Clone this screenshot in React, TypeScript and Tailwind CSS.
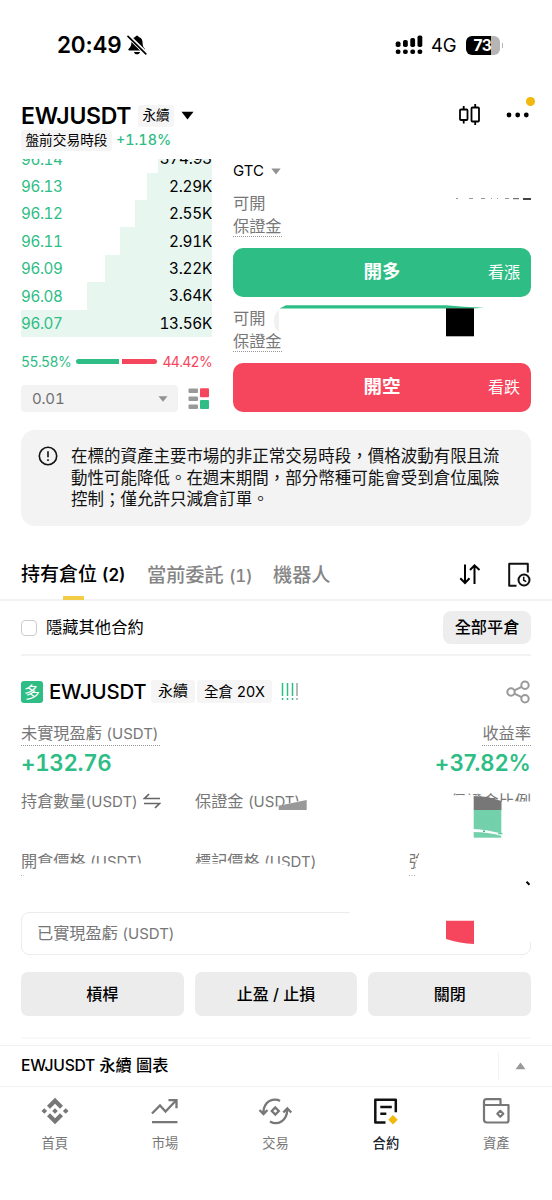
import React from "react";

type BookRow = {
  price: string;
  amount: string;
  depth: number;
};

type NavItem = {
  label: string;
  icon: React.ReactNode;
  active?: boolean;
};

const bookRows: BookRow[] = [
  { price: "96.14", amount: "374.93", depth: 54 },
  { price: "96.13", amount: "2.29K", depth: 65 },
  { price: "96.12", amount: "2.55K", depth: 77.5 },
  { price: "96.11", amount: "2.91K", depth: 92 },
  { price: "96.09", amount: "3.22K", depth: 107.5 },
  { price: "96.08", amount: "3.64K", depth: 125 },
  { price: "96.07", amount: "13.56K", depth: 191 },
];

function StatusBar() {
  return (
    <div className="flex h-[90px] items-center justify-between pl-[57px] pr-[49px]">
      <div className="flex items-center gap-[5px]">
        <span className="w-[65px] whitespace-nowrap text-[22.500px] font-semibold leading-none tracking-[-0.200px]">20:49</span>
        <svg width="20" height="20" viewBox="0 0 20 20">
          <path
            d="M10 .8c.9 0 1.500.5 1.700 1.300 2.600.8 3.900 2.900 3.900 5.700 0 3.400.8 4.700 2.200 6 .7.7.3 1.800-.7 1.800H2.300c-1 0-1.300-1.100-.6-1.800 1.400-1.300 2.600-2.600 2.700-6 0-2.800 1.300-4.900 3.900-5.700C8.500 1.300 9.100.8 10 .8ZM7 17h6c-.3 1.400-1.500 2.300-3 2.300S7.300 18.400 7 17Z"
            fill="#000"
          />
          <path d="M1.500 1.300 19 18.500" stroke="#fff" strokeWidth="4.200" />
          <path d="M1 1.300 18.800 18.800" stroke="#000" strokeWidth="1.700" strokeLinecap="round" />
        </svg>
      </div>
      <div className="flex items-center">
        <svg width="28" height="20" viewBox="0 0 28 20">
          <rect x="0.700" y="6.500" width="4.800" height="5.500" rx="1.800" />
          <rect x="8" y="5" width="4.800" height="7" rx="1.800" />
          <rect x="15.300" y="3" width="4.800" height="9" rx="1.800" />
          <rect x="22.500" y="0.500" width="4.800" height="11.500" rx="1.800" />
          <rect x="0.700" y="14.500" width="4.800" height="4.600" rx="2" />
          <rect x="8" y="14.500" width="4.800" height="4.600" rx="2" />
          <rect x="15.300" y="14.500" width="4.800" height="4.600" rx="2" />
          <rect x="22.500" y="14.500" width="4.800" height="4.600" rx="2" />
        </svg>
        <span className="ml-[8px] w-[27px] whitespace-nowrap text-[18.500px] leading-none tracking-[-0.300px]">4G</span>
        <div className="ml-[8px] flex h-[19px] w-[34px] items-center justify-center overflow-hidden rounded-[6px] bg-[linear-gradient(to_right,#000_73%,#b5b5b5_73%)] pr-[1px] pt-[2px]">
          <span className="text-[15.500px] font-bold leading-none tracking-[-0.300px] text-white">73</span>
        </div>
        <span className="ml-[2px] h-[5px] w-[1px] bg-[#b5b5b5]" />
      </div>
    </div>
  );
}

function Header() {
  return (
    <header className="flex h-[69px] justify-between pl-[21px] pr-[22px]">
      <div className="pt-[13px]">
        <div className="flex h-[25px] items-center">
          <h1 className="w-[117px] whitespace-nowrap pt-[2px] text-[23px] font-semibold leading-none tracking-[-0.300px]">EWJUSDT</h1>
          <span className="flex h-[22px] w-[36px] items-center justify-center rounded-[3px] bg-[#f5f5f5] text-[13.500px]">永續</span>
          <svg className="ml-[7px]" width="13" height="9" viewBox="0 0 13 9">
            <path d="M.5.700h12L6.500 8.500Z" />
          </svg>
        </div>
        <div className="mt-[1px] flex h-[22px] items-center">
          <span className="flex h-[21px] w-[91px] items-center justify-center whitespace-nowrap rounded-[3px] bg-[#f5f5f5] text-[13.700px]">
            盤前交易時段
          </span>
          <span className="ml-[4px] text-[14.300px] font-medium tabular-nums text-[#2ebd85]">+1.18%</span>
        </div>
      </div>
      <div className="relative flex h-[50px] items-center gap-[25px] self-start">
        <svg width="22" height="24" viewBox="0 0 22 24" fill="none" stroke="#000" strokeWidth="1.800">
          <rect x="1" y="6.500" width="7.500" height="10.500" rx="1" />
          <path d="M4.700 3v3.500M4.700 17v3.500M16.200 1v3.500M16.200 18.500v3.500" />
          <rect x="12.500" y="4.500" width="7.500" height="14" rx="1" />
        </svg>
        <svg width="24" height="6" viewBox="0 0 24 6">
          <circle cx="3" cy="3" r="2.400" />
          <circle cx="11.700" cy="3" r="2.400" />
          <circle cx="20.300" cy="3" r="2.400" />
        </svg>
        <span className="absolute right-[-5px] top-[7px] h-[9px] w-[9px] rounded-full bg-[#f0b90b]" />
      </div>
    </header>
  );
}

function OrderBook() {
  return (
    <div className="w-[191px] tabular-nums">
      <div className="flex h-[178px] flex-col justify-end overflow-hidden">
        {bookRows.map((row) => (
          <div key={row.price} className="relative flex h-[27.400px] shrink-0 items-center justify-between pt-[2px]">
            <span className="absolute inset-y-0 right-0 bg-[#e8f6f0]" style={{ width: row.depth }} />
            <span className="relative text-[15.200px] tracking-[-0.400px] text-[#2ebd85]">{row.price}</span>
            <span className="relative text-[15.300px] tracking-[-0.250px]">{row.amount}</span>
          </div>
        ))}
      </div>
      <div className="mt-[13px] flex h-[22px] items-center text-[14px]">
        <span className="w-[55px] tracking-[-0.600px] text-[#2ebd85]">55.58%</span>
        <span className="h-[5px] w-[43px] rounded-l-full bg-[#2ebd85]" />
        <span className="ml-[3px] h-[5px] w-[35px] rounded-r-full bg-[#f6465d]" />
        <span className="ml-auto tracking-[-0.700px] text-[#f6465d]">44.42%</span>
      </div>
      <div className="mt-[13px] flex h-[27px] items-center">
        <div className="flex h-full w-[157px] items-center justify-between rounded-[4px] bg-[#f3f3f3] pl-[11px] pr-[10px]">
          <span className="pt-[1px] text-[15px] tracking-[-0.200px] text-[#707070]">0.01</span>
          <svg width="10" height="6" viewBox="0 0 10 6">
            <path d="M.5.300h9L5 5.800Z" fill="#929292" />
          </svg>
        </div>
        <svg className="ml-[10px]" width="22" height="22" viewBox="0 0 22 22">
          <g fill="#999">
            <rect x="0.500" y="0.500" width="9.500" height="4.500" rx="1" />
            <rect x="0.500" y="8.500" width="9.500" height="4.500" rx="1" />
            <rect x="0.500" y="16.500" width="9.500" height="4.500" rx="1" />
          </g>
          <rect x="12" y="0.300" width="9" height="9" rx="1" fill="#f6465d" />
          <rect x="12" y="12" width="9" height="9" rx="1" fill="#2ebd85" />
        </svg>
      </div>
    </div>
  );
}

function MarginLabels() {
  return (
    <div className="text-[16.200px] leading-[23px] text-[#777]">
      <div>可開</div>
      <div className="h-[22px] w-[49px] whitespace-nowrap border-b border-dotted border-[#999] leading-[22px]">保證金</div>
    </div>
  );
}

function OrderForm() {
  return (
    <div className="w-[298px]">
      <div className="flex h-[24px] items-center gap-[7px] text-[15px]">
        GTC
        <svg width="10" height="7" viewBox="0 0 10 7">
          <path d="M.3.500h9.400L5 6.500Z" fill="#929292" />
        </svg>
      </div>
      <div className="mt-[9px]">
        <MarginLabels />
      </div>
      <button className="mt-[11px] grid h-[49px] w-full grid-cols-[1fr_auto_1fr] items-center rounded-[10px] bg-[#2ebd85] pb-[1px] text-white">
        <span />
        <span className="text-[18.500px] font-bold">開多</span>
        <span className="pr-[11px] text-right text-[16px]">看漲</span>
      </button>
      <div className="mt-[10px]">
        <MarginLabels />
      </div>
      <button className="mt-[11px] grid h-[49px] w-full grid-cols-[1fr_auto_1fr] items-center rounded-[10px] bg-[#f6465d] pb-[1px] text-white">
        <span />
        <span className="text-[18.500px] font-bold">開空</span>
        <span className="pr-[11px] text-right text-[16px]">看跌</span>
      </button>
    </div>
  );
}

function Notice() {
  return (
    <div className="mx-[21px] mt-[18px] flex h-[96px] rounded-[14px] bg-[#f3f3f3] pl-[17px] pt-[16px]">
      <svg className="shrink-0" width="20" height="20" viewBox="0 0 20 20" fill="none" stroke="#111">
        <circle cx="10" cy="10" r="8.700" strokeWidth="1.600" />
        <path d="M10 5.200v6M10 13.200v1.800" strokeWidth="1.600" />
      </svg>
      <p className="ml-[13px] whitespace-nowrap text-[16.490px] leading-[21.500px] text-[#111]">
        在標的資產主要市場的非正常交易時段，價格波動有限且流
        <br />
        動性可能降低。在週末期間，部分幣種可能會受到倉位風險
        <br />
        控制；僅允許只減倉訂單。
      </p>
    </div>
  );
}

function Tabs() {
  return (
    <div className="mt-[48px] flex h-[27px] items-start border-b-2 border-[#f3f3f3] pl-[21px] pr-[20px]">
      <div className="relative -mt-[12px] flex h-[38px] w-[105px] items-start whitespace-nowrap pt-[1px]">
        <span className="text-[19px] font-medium leading-[24px]">
          持有倉位 <span className="text-[17px] font-semibold">(2)</span>
        </span>
        <span className="absolute bottom-[0px] left-[42px] h-[4px] w-[21px] bg-[#f3cd45]" />
      </div>
      <span className="-mt-[11px] ml-[21px] w-[105px] whitespace-nowrap text-[19.200px] font-medium leading-[24px] text-[#858585]">
        當前委託 <span className="text-[17px] tabular-nums tracking-[-0.300px]">(1)</span>
      </span>
      <span className="-mt-[11px] ml-[21px] whitespace-nowrap text-[19.200px] font-medium leading-[24px] text-[#858585]">機器人</span>
      <div className="-mt-[12px] ml-auto flex gap-[26px]">
        <svg width="22" height="24" viewBox="0 0 22 24" fill="none" stroke="#000" strokeWidth="2">
          <path d="M6 2.500v18.500M1.300 16.300 6 21l4.500-4.700M15.500 22V3.500M11 8l4.500-4.700L20.500 8" />
        </svg>
        <svg width="25" height="26" viewBox="0 0 25 26" fill="none" stroke="#111" strokeWidth="2">
          <path d="M9.500 23.800H2.200V1.700h18.600v8.800" strokeLinejoin="round" />
          <circle cx="17" cy="18" r="5.500" />
          <path d="M16.700 14.800v3.400l2.500 1.400" strokeWidth="1.500" />
        </svg>
      </div>
    </div>
  );
}

function FilterRow() {
  return (
    <div className="mx-[21px] flex h-[55px] items-center border-b-2 border-[#f3f3f3]">
      <span className="h-[16px] w-[16px] rounded-[4px] border-[1.500px] border-[#ccc]" />
      <span className="ml-[9px] text-[16.300px]">隱藏其他合約</span>
      <button className="ml-auto h-[33px] w-[88px] rounded-[8px] bg-[#ededed] text-[16.200px] font-medium">全部平倉</button>
    </div>
  );
}

function PositionHead() {
  return (
    <div className="mt-[23px] flex h-[25px] items-center">
      <span className="flex h-[22px] w-[22px] items-center justify-center rounded-[3px] bg-[#2ebd85] text-[16px] text-white">多</span>
      <span className="ml-[6px] w-[102px] whitespace-nowrap pt-[1px] text-[20.400px] font-medium tracking-[-0.200px]">EWJUSDT</span>
      <span className="flex h-[23px] w-[44px] items-center justify-center rounded-[3px] bg-[#f5f5f5] text-[15px]">永續</span>
      <span className="ml-[2px] flex h-[23px] w-[75px] items-center justify-center whitespace-nowrap rounded-[3px] bg-[#f5f5f5] text-[14.500px]">
        全倉 20X
      </span>
      <svg className="ml-[9px]" width="18" height="18" viewBox="0 0 18 18" strokeWidth="1.500">
        <path d="M1.500 0v13M6.500 0v13M11.500 0v13M1.500 15v2M6.500 15v2M11.500 15v2" stroke="#2ebd85" />
        <path d="M16 0v13M16 15v2" stroke="#9aa7a1" />
      </svg>
      <svg className="ml-auto" width="25" height="24" viewBox="0 0 25 24" fill="none" stroke="#999" strokeWidth="2">
        <circle cx="5" cy="12" r="3.700" />
        <circle cx="19" cy="5.200" r="3.700" />
        <circle cx="19" cy="18.800" r="3.700" />
        <path d="m8.300 10.400 7.400-3.600M8.300 13.600l7.400 3.600" />
      </svg>
    </div>
  );
}

function Position() {
  return (
    <section className="mx-[21px]">
      <PositionHead />
      <div className="mt-[18px] flex h-[24px] justify-between text-[#777]">
        <span className="w-[139px] whitespace-nowrap border-b border-dotted border-[#999] text-[16.200px] leading-[22px]">
          未實現盈虧 <span className="text-[15px]">(USDT)</span>
        </span>
        <span className="border-b border-dotted border-[#999] text-[16.200px] leading-[22px]">收益率</span>
      </div>
      <div className="flex h-[35px] items-center justify-between text-[22.300px] font-semibold leading-none text-[#2ebd85]">
        <span className="tabular-nums tracking-[-0.300px]">+132.76</span>
        <span className="text-[22.200px] tracking-[0.100px]">+37.82%</span>
      </div>
      <div className="mt-[8px] flex h-[24px] items-center whitespace-nowrap text-[16.200px] text-[#777]">
        <div className="flex w-[174px] items-center">
          <span>持倉數量<span className="text-[15px]">(USDT)</span></span>
          <svg className="ml-[5px]" width="18" height="16" viewBox="0 0 18 16" fill="none" stroke="#666" strokeWidth="1.700">
            <path d="M17 5.500H1.500L6 1M1 10.500h15.500L12 15" />
          </svg>
        </div>
        <span>保證金 <span className="text-[15px]">(USDT)</span></span>
        <span className="ml-auto">保證金比例</span>
      </div>
      <div className="mt-[36px] flex h-[25px] items-center whitespace-nowrap text-[16.200px] text-[#777]">
        <span className="w-[174px]">開倉價格 <span className="text-[15px]">(USDT)</span></span>
        <span className="w-[214px]">標記價格 <span className="text-[15px]">(USDT)</span></span>
        <span>強</span>
      </div>
      <div className="mt-[38px] flex h-[43px] items-center rounded-[8px] border-[1.500px] border-[#ececec] pl-[15px] text-[16.200px] text-[#777]">
        <span>已實現盈虧 <span className="text-[15px]">(USDT)</span></span>
      </div>
      <div className="mt-[17px] grid grid-cols-3 gap-[11px] text-[16px] font-medium">
        <button className="h-[44px] rounded-[7px] bg-[#ececec]">槓桿</button>
        <button className="h-[44px] rounded-[7px] bg-[#ececec]">止盈 / 止損</button>
        <button className="h-[44px] rounded-[7px] bg-[#ececec]">關閉</button>
      </div>
      <div className="mt-[21px] h-[2px] bg-[#f8f8f8]" />
    </section>
  );
}

function ChartBar() {
  return (
    <div className="mt-[6px] flex h-[42px] items-center justify-between border-y-[1.500px] border-[#f1f1f1] pb-[1px] pl-[21px]">
      <span className="whitespace-nowrap text-[16.200px] font-medium">
        <span className="text-[15.700px] tracking-[-0.300px]">EWJUSDT</span> 永續 圖表
      </span>
      <span className="flex h-[28px] w-[54px] items-center border-l border-[#f4f4f4] pl-[16px]">
        <svg width="11" height="8" viewBox="0 0 11 8">
          <path d="M.5 7.300h10L5.500.500Z" fill="#999" />
        </svg>
      </span>
    </div>
  );
}

const navItems: NavItem[] = [
  {
    label: "首頁",
    icon: (
      <g fill="#777">
        <path d="m14 .8 8 8-3 3-5-5-5 5-3-3ZM14 27.200l8-8-3-3-5 5-5-5-3 3ZM14 11.200l2.800 2.800-2.800 2.800-2.800-2.800ZM3.300 11.200 6.100 14l-2.800 2.800L.5 14ZM24.700 11.200l2.800 2.800-2.800 2.800-2.800-2.800Z" />
      </g>
    ),
  },
  {
    label: "市場",
    icon: (
      <g fill="none" stroke="#777" strokeWidth="2.300">
        <path d="M1 16.500 9 8.500l5.500 6L25 3.500M17.500 3.200h8v8M1 25.200h25.500" />
      </g>
    ),
  },
  {
    label: "交易",
    icon: (
      <g fill="none" stroke="#777" strokeWidth="2.300">
        <path d="M2.600 16.500C2 9 6.500 2.700 14 2.700c2 0 3.700.4 5 1.200M-1.500 13l4 4 4-4M9 24.500c7.500 4.300 17.200-.5 17.200-12M22.300 15.500l4-4 4 4" />
        <path d="m14.300 10.500 3.500 3.500-3.500 3.500-3.500-3.500Z" />
      </g>
    ),
  },
  {
    label: "合約",
    active: true,
    icon: (
      <g fill="none" stroke="#111" strokeWidth="2.500">
        <path d="M13.500 25.500H3.300V2.700h20.500v12.500M8.300 10h11.500M8.300 16.700h6" strokeLinejoin="round" />
        <path d="m21 18 4.700 4.700L21 27.400l-4.700-4.700Z" fill="#f0b90b" stroke="none" />
      </g>
    ),
  },
  {
    label: "資產",
    icon: (
      <g fill="none" stroke="#777" strokeWidth="2.200" strokeLinejoin="round">
        <path d="M2 8h24.500v15.500c0 1.300-.7 2-2 2H5c-2 0-3-1-3-3V4.500c0-1.500.8-2.300 2.300-2.300H18.500V8" />
        <path d="m18.300 13.800 3 3-3 3-3-3Z" />
      </g>
    ),
  },
];

function BottomNav() {
  return (
    <nav className="grid h-[113px] grid-cols-5 pt-[10px]">
      {navItems.map((item) => (
        <a key={item.label} className="flex flex-col items-center">
          <svg className="-ml-[1px] overflow-visible" width="28" height="28" viewBox="0 0 28 28">
            {item.icon}
          </svg>
          <span
            className={
              item.active
                ? "-ml-[1px] mt-[9px] text-[13.300px] font-medium text-[#202630]"
                : "-ml-[1px] mt-[9px] text-[13.300px] text-[#777]"
            }
          >
            {item.label}
          </span>
        </a>
      ))}
    </nav>
  );
}

// Hand-made redactions painted over balances and amounts.
function Redactions() {
  return (
    <svg className="pointer-events-none absolute left-0 top-0" width="552" height="1200" viewBox="0 0 552 1200">
      <g fill="none" stroke="#999" strokeWidth="1">
        <path d="M456 198.500h2M469 198.500h4M481 198.500h4M491 198.500h1M497 198.500h1M505 198.500h4" />
        <path d="M513 198.700h6" stroke="#555" />
        <path d="M523 199h8" stroke="#222" strokeWidth="1.700" />
      </g>
      <path d="M279 310c-7 4-7 18 0 22Z" fill="#f1f1f1" />
      <path d="M279.500 308.500 286 305.300h160l18 1.500 20 .9-12 .8Z" fill="#2ebd85" />
      <path d="M446 308.300h28v28h-28Z" fill="#000" />

      <path d="M276 806.500 307 799v14h-31Z" fill="#fff" />
      <path d="M278.700 805.700 306.700 800v10h-28Z" fill="#999" />

      <path d="M446 795.200h28l27 6.300h31V816h-86Z" fill="#fff" />
      <path d="M473.700 796 488 797l13.500 4v9h-27.800Z" fill="#777" />
      <path d="M473.700 810h27.600v27.700h-27.600Z" fill="#72d1ab" />
      <path d="M473 829c10 .3 19 2.500 29 4.500v2.500c-9-2.500-19-4-29-4Z" fill="#fff" />
      <path d="M483 830.500h2v1.500h-2ZM498 833.300h4.500v1H498Z" fill="#2ebd85" />

      <path d="M37 863.500h108V874H37Z" fill="#fff" />
      <path d="M194 863.500h84l10 2.500 5 8h-99Z" fill="#fff" />
      <path d="M421 850l-5 12v12h12v-24Z" fill="#fff" />
      <path d="M21 875.500h3M409 875.500h6" stroke="#aaa" strokeDasharray="1 1.500" />
      <path d="m526.500 881.700 3 3" stroke="#000" strokeWidth="2" />

      <path d="M350 910h183v32H350Z" fill="#fff" />
      <path d="M446 920.700h28V944c-9-.5-19-2-28-5Z" fill="#f6465d" />
    </svg>
  );
}

export default function App() {
  return (
    <main
      lang="zh-Hant"
      className="relative h-[1200px] w-[552px] overflow-hidden bg-white font-['Inter','Noto_Sans_CJK_TC',sans-serif] text-black"
    >
      <StatusBar />
      <Header />
      <div className="flex h-[253px] gap-[21px] pl-[21px]">
        <OrderBook />
        <OrderForm />
      </div>
      <Notice />
      <Tabs />
      <FilterRow />
      <Position />
      <ChartBar />
      <BottomNav />
      <Redactions />
    </main>
  );
}
